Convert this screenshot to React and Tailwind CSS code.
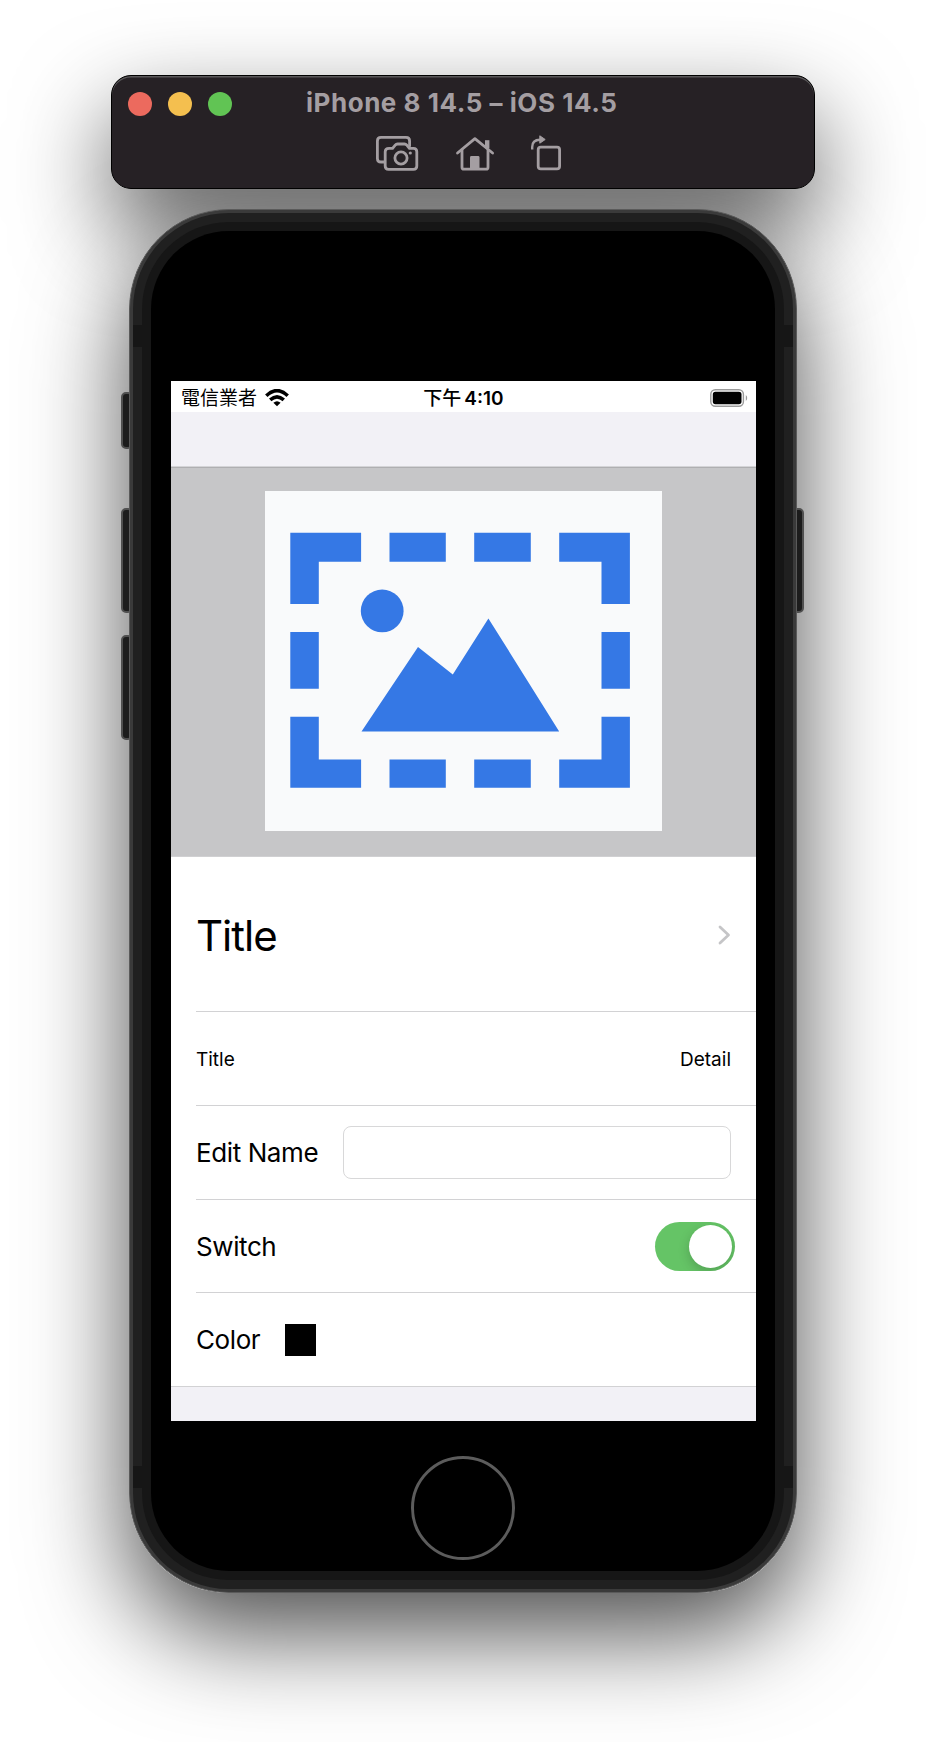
const HAIR = "h-px shrink-0 bg-[#d2d2d4]";

function CameraIcon() {
  return (
    <svg width="44" height="36" viewBox="375 136 44 36" fill="none" stroke="#a49ea2" strokeWidth="2.8" strokeLinejoin="round" strokeLinecap="round" className="block">
      <path d="M384.500 162H381q-3.600 0-3.600-3.600V141q0-3.600 3.600-3.600h25q3.600 0 3.600 3.600v5" />
      <path d="M389 148.300h3.600l2.600-3.200q.9-1.100 2.300-1.100h7q1.400 0 2.300 1.100l2.600 3.200H413.400q3.400 0 3.400 3.400V166q0 3.400-3.400 3.400H388.600q-3.400 0-3.400-3.400V151.700q0-3.400 3.800-3.400z" />
      <circle cx="401" cy="158" r="6.100" />
      <circle cx="410.300" cy="153" r="1.600" fill="#a49ea2" stroke="none" />
    </svg>
  );
}

function HomeIcon() {
  return (
    <svg width="40" height="36" viewBox="455 136 40 36" fill="none" stroke="#a49ea2" strokeWidth="2.800" strokeLinejoin="round" strokeLinecap="round" className="block">
      <path d="M457.500 153 474.900 138.700 492.600 153" />
      <path d="M462 150v17.200q0 2 2 2h22q2 0 2-2V150" />
      <path d="M487.200 140.200v8" strokeWidth="4.400" strokeLinecap="butt" />
      <path d="M470 169v-11.600q0-1.400 1.400-1.400h6.700q1.400 0 1.400 1.400V169z" fill="#a49ea2" stroke="none" />
    </svg>
  );
}

function RotateIcon() {
  return (
    <svg width="32" height="36" viewBox="530 135 32 36" fill="none" stroke="#a49ea2" strokeWidth="2.800" strokeLinejoin="round" className="block">
      <rect x="538.200" y="147.200" width="21.400" height="21.600" rx="2.600" />
      <path d="M532.200 149.500v-2.500q0-7.300 7.800-7.300" strokeWidth="2.400" />
      <path d="M539.800 135.800 545.200 139.500 539.800 143.200z" fill="#a49ea2" strokeWidth="1" />
    </svg>
  );
}

function Toolbar() {
  return (
    <div className="relative">
      <div className="absolute inset-0 -z-10 rounded-[20px] shadow-[0_40px_95px_rgba(0,0,0,0.64)]" />
      <div className="flex h-[114px] w-[704px] flex-col rounded-[20px] border border-black bg-[#262125] shadow-[inset_0_1.5px_0_#5a585a]">
        <div className="flex h-[56px] items-center pl-4">
          <div className="flex gap-4">
            <span className="h-6 w-6 rounded-full bg-[#ec6a5e]" />
            <span className="h-6 w-6 rounded-full bg-[#f4bf4f]" />
            <span className="h-6 w-6 rounded-full bg-[#61c454]" />
          </div>
          <h1 className="-mt-[2px] ml-[74px] whitespace-nowrap text-[26px] font-bold leading-8 tracking-[0.53px] text-[#a49ea2]">iPhone 8 14.5 – iOS 14.5</h1>
        </div>
        <div className="flex items-start pl-[263px] pt-[4px]">
          <CameraIcon />
          <div className="ml-[36px]"><HomeIcon /></div>
          <div className="-mt-px ml-[35px]"><RotateIcon /></div>
        </div>
      </div>
    </div>
  );
}

function StatusBar() {
  return (
    <div className="grid h-[31px] shrink-0 grid-cols-3 items-center bg-white text-[19px] leading-[31px]">
      <div className="flex items-center gap-[8px] pl-[10px]">
        <span className="mt-[2px]">電信業者</span>
        <svg width="24" height="18" viewBox="0 0 24 18" fill="none" stroke="#000" strokeWidth="3.500" className="block">
          <path d="M1.300 6.800Q12-3.600 22.700 6.800" />
          <path d="M5.200 10.900Q12 4.800 18.800 10.900" />
          <path d="M8.400 13.700Q12 10.700 15.600 13.700L12 17.300z" fill="#000" stroke="none" />
        </svg>
      </div>
      <div className="mt-[2px] text-center font-medium">下午<span className="ml-[3px] font-semibold">4:10</span></div>
      <div className="flex justify-end pr-[8px]">
        <svg width="38" height="18" viewBox="0 0 38 18" className="block">
          <rect x=".8" y=".8" width="32.600" height="16.400" rx="4.500" fill="none" stroke="#9b9b9b" strokeWidth="1.400" />
          <rect x="2.800" y="2.800" width="28.700" height="12.400" rx="2.600" />
          <path d="M35.800 6q1.400 .8 1.400 3t-1.400 3z" fill="#9b9b9b" />
        </svg>
      </div>
    </div>
  );
}

function Placeholder() {
  return (
    <svg width="397" height="340" viewBox="265.200 491.300 397 340" fill="#3578e5" className="block bg-[#f9fafb]">
      <path d="M290.500 533H361.300V562H319V604.300H290.500z M559.400 533H630.100V604.300H601.700V562H559.400z M290.500 717H319V759.700H361.300V788H290.500z M601.700 717H630.100V788H559.400V759.700H601.700z" />
      <path d="M389.700 533H446V562H389.700z M474.400 533H531V562H474.400z M389.700 759.700H446V788H389.700z M474.400 759.700H531V788H474.400z M290.500 632.300H319V689H290.500z M601.700 632.300H630.100V689H601.700z" />
      <circle cx="382.400" cy="611.200" r="21.400" />
      <path d="M361.700 731.700 418.200 647.300 453 674.700 488.600 618.700 559.400 731.700z" />
    </svg>
  );
}

function Screen() {
  return (
    <div className="flex h-[1040px] w-[585px] shrink-0 flex-col overflow-hidden bg-white text-black">
      <StatusBar />
      <div className="h-[54px] shrink-0 bg-[#f2f1f6]" />
      <div className="h-px shrink-0 bg-[#d4d4d7]" />
      <div className="flex h-[389px] shrink-0 justify-center border-t border-[#afafb1] bg-[#c6c6c8] pt-[23px]">
        <Placeholder />
      </div>
      <div className="h-px shrink-0 bg-[#d0d0d2]" />
      <div className="flex h-[154px] shrink-0 items-center justify-between pl-[25px] pr-[25px]">
        <span className="mt-[4px] text-[42px] leading-none tracking-[-1px]">Title</span>
        <svg width="13" height="20" viewBox="0 0 13 20" fill="none" stroke="#c5c5c7" strokeWidth="2.800" strokeLinecap="round" strokeLinejoin="round" className="mt-[2px]"><path d="m2 2 8.500 8L2 18" /></svg>
      </div>
      <div className={HAIR + " ml-[25px]"} />
      <div className="flex h-[93px] shrink-0 items-center justify-between pl-[25px] pr-[25px] pt-[4px] text-[19px]">
        <span>Title</span>
        <span>Detail</span>
      </div>
      <div className={HAIR + " ml-[25px]"} />
      <div className="flex h-[93px] shrink-0 items-center pl-[25px] pr-[25px]">
        <label className="w-[147px] whitespace-nowrap text-[26px] tracking-[-0.4px]">Edit Name</label>
        <input className="h-[53px] min-w-0 flex-1 rounded-[8px] border border-[#d8d8d9] bg-white" />
      </div>
      <div className={HAIR + " ml-[25px]"} />
      <div className="flex h-[92px] shrink-0 items-center justify-between pl-[25px] pr-[21px]">
        <span className="mt-px text-[26px] tracking-[-0.4px]">Switch</span>
        <div className="flex h-[49px] w-[80px] justify-end overflow-hidden rounded-full bg-[#65c466] p-[3px]">
          <span className="h-[43px] w-[43px] rounded-full bg-white shadow-[0_4px_12px_rgba(0,0,0,0.18)]" />
        </div>
      </div>
      <div className={HAIR + " ml-[25px]"} />
      <div className="flex h-[93px] shrink-0 items-center pl-[25px]">
        <span className="w-[89px] text-[26px] tracking-[-0.4px]">Color</span>
        <span className="h-8 w-[31px] bg-black" />
      </div>
      <div className={HAIR} />
      <div className="min-h-0 flex-1 bg-[#f2f1f6]" />
    </div>
  );
}

function Phone() {
  return (
    <div className="relative h-[1384px] w-[668px]">
      <div className="absolute inset-0 -z-10 rounded-[100px] shadow-[0_40px_100px_rgba(0,0,0,0.7)]" />
      <span className="absolute left-[-8px] top-[183px] h-[57px] w-[12px] rounded-[5px] border-2 border-[#505050] bg-[#1c1c1c]" />
      <span className="absolute left-[-8px] top-[299px] h-[105px] w-[12px] rounded-[5px] border-2 border-[#505050] bg-[#1c1c1c]" />
      <span className="absolute left-[-8px] top-[426px] h-[105px] w-[12px] rounded-[5px] border-2 border-[#505050] bg-[#1c1c1c]" />
      <span className="absolute right-[-7px] top-[299px] h-[105px] w-[12px] rounded-[5px] border-2 border-[#505050] bg-[#1c1c1c]" />
      <div className="relative h-full rounded-[100px] border border-[#5a5a5a] bg-[#3a3a3a] p-[3px]">
        <div className="h-full rounded-[96px] bg-[#202020] p-[9px]">
          <div className="h-full rounded-[87px] bg-[#161616] p-[9px]">
            <div className="flex h-full flex-col items-start rounded-[78px] bg-black pl-[20px] pt-[150px]">
              <Screen />
              <div className="ml-[240px] mt-[35px] h-[104px] w-[104px] shrink-0 rounded-full border-[3px] border-[#5c5c5c]" />
            </div>
          </div>
        </div>
        <span className="absolute left-[3px] top-[115px] h-[22px] w-[10px] bg-[#161616]" />
        <span className="absolute right-[3px] top-[115px] h-[22px] w-[10px] bg-[#161616]" />
        <span className="absolute bottom-[104px] left-[3px] h-[22px] w-[10px] bg-[#161616]" />
        <span className="absolute bottom-[104px] right-[3px] h-[22px] w-[10px] bg-[#161616]" />
      </div>
    </div>
  );
}

export default function App() {
  return (
    <main className="isolate flex h-[1742px] w-[926px] flex-col items-center gap-[20px] overflow-hidden bg-white pt-[75px] font-['Inter','Noto_Sans_CJK_TC',sans-serif]">
      <Toolbar />
      <Phone />
    </main>
  );
}
